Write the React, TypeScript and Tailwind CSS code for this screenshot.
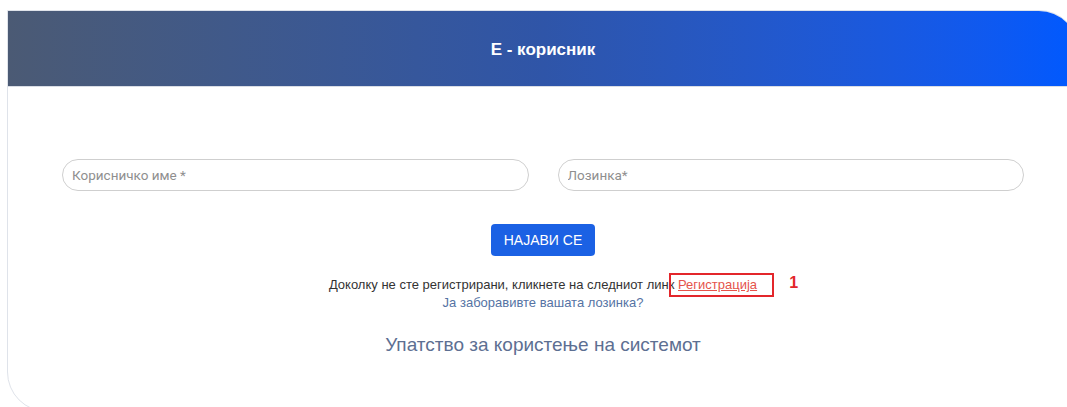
const font = { fontFamily: '"Liberation Sans", Arial, sans-serif' }

function Field({ placeholder }: { placeholder: string }) {
  return (
    <input
      type="text"
      placeholder={placeholder}
      className="h-[32px] w-full rounded-[16px] border border-[#cfcfcf] bg-white px-[9px] text-[13.5px] text-[#333] outline-none placeholder:text-[#8f8f8f]"
      style={{ fontFamily: 'Roboto, "Liberation Sans", sans-serif' }}
    />
  )
}

export default function App() {
  return (
    <div className="h-[407px] w-[1067px] overflow-hidden bg-white" style={font}>
      <div className="ml-[7px] mt-[10px] h-[402px] w-[1072px] overflow-hidden rounded-tr-[40px] rounded-bl-[40px] border border-[#dfe3ea] bg-white">
        <header className="flex h-[76px] items-center justify-center border-b border-[#d9dde5] bg-gradient-to-r from-[#4b5a74] via-[#2f55a8] to-[#0059ff]">
          <h1 className="pt-[2px] text-[17px] font-bold text-white">Е - корисник</h1>
        </header>

        <div className="px-[54px] pt-[72px]">
          <div className="grid grid-cols-2 gap-[29px]">
            <Field placeholder="Корисничко име *" />
            <Field placeholder="Лозинка*" />
          </div>

          <div className="mt-[33px] flex justify-center">
            <button
              type="button"
              className="h-[32px] rounded-[4px] bg-[#1b61e4] px-[13px] text-[14px] uppercase text-white"
            >
              Најави се
            </button>
          </div>

          <div className="mt-[20px] flex flex-col items-center text-[13px] leading-[18px]">
            <p className="relative text-[#333]">
              Доколку не сте регистрирани, кликнете на следниот линк{' '}
              <a href="#" className="text-[#e5534b] underline">
                Регистрација
              </a>
              <span className="absolute -top-[3px] -right-[17px] h-[24px] w-[105px] border-2 border-[#e3262b]" />
              <span className="absolute -right-[41px] -top-[2px] text-[16px] font-bold text-[#e3262b]">1</span>
            </p>
            <a href="#" className="text-[#5573a4]">
              Ја заборавивте вашата лозинка?
            </a>
          </div>

          <p className="mt-[19px] text-center text-[19px] text-[#5d6f92]">Упатство за користење на системот</p>
        </div>
      </div>
    </div>
  )
}
